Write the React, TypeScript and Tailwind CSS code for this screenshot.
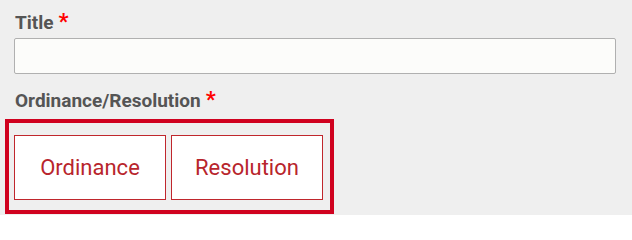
import React, { useState } from 'react';

export default function App() {
  const [kind, setKind] = useState<string>('');

  return (
    <div className="w-full h-[215px] bg-[#efefef] font-['Roboto',sans-serif] overflow-hidden">
      <div className="pt-[11px] pl-[15px] text-[19px] leading-[24px] font-bold text-[#555555]">
        Title<span className="ml-[5px] text-[22px] leading-[20px] text-[#ff0000]">*</span>
      </div>
      <input
        type="text"
        className="block mt-[3px] ml-[14px] w-[602px] h-[36px] bg-[#fcfcfa] border border-[#b0b0b0] rounded-[2px] px-2 outline-none"
      />
      <div className="mt-[15px] pl-[15px] text-[19px] leading-[24px] font-bold text-[#555555]">
        Ordinance/Resolution<span className="ml-[5px] text-[22px] leading-[20px] text-[#ff0000]">*</span>
      </div>
      <div className="mt-[6px] ml-[5px] w-[329px] h-[95px] border-4 border-[#d0021f] pl-[5px] pt-[12px] flex gap-[5px]">
        {['Ordinance', 'Resolution'].map((k) => (
          <button
            key={k}
            onClick={() => setKind(k)}
            className={`w-[152px] h-[65px] border border-[#c0272d] text-[22px] text-[#b8252c] ${
              kind === k ? 'bg-[#fbeaea]' : 'bg-white'
            }`}
          >
            {k}
          </button>
        ))}
      </div>
    </div>
  );
}
